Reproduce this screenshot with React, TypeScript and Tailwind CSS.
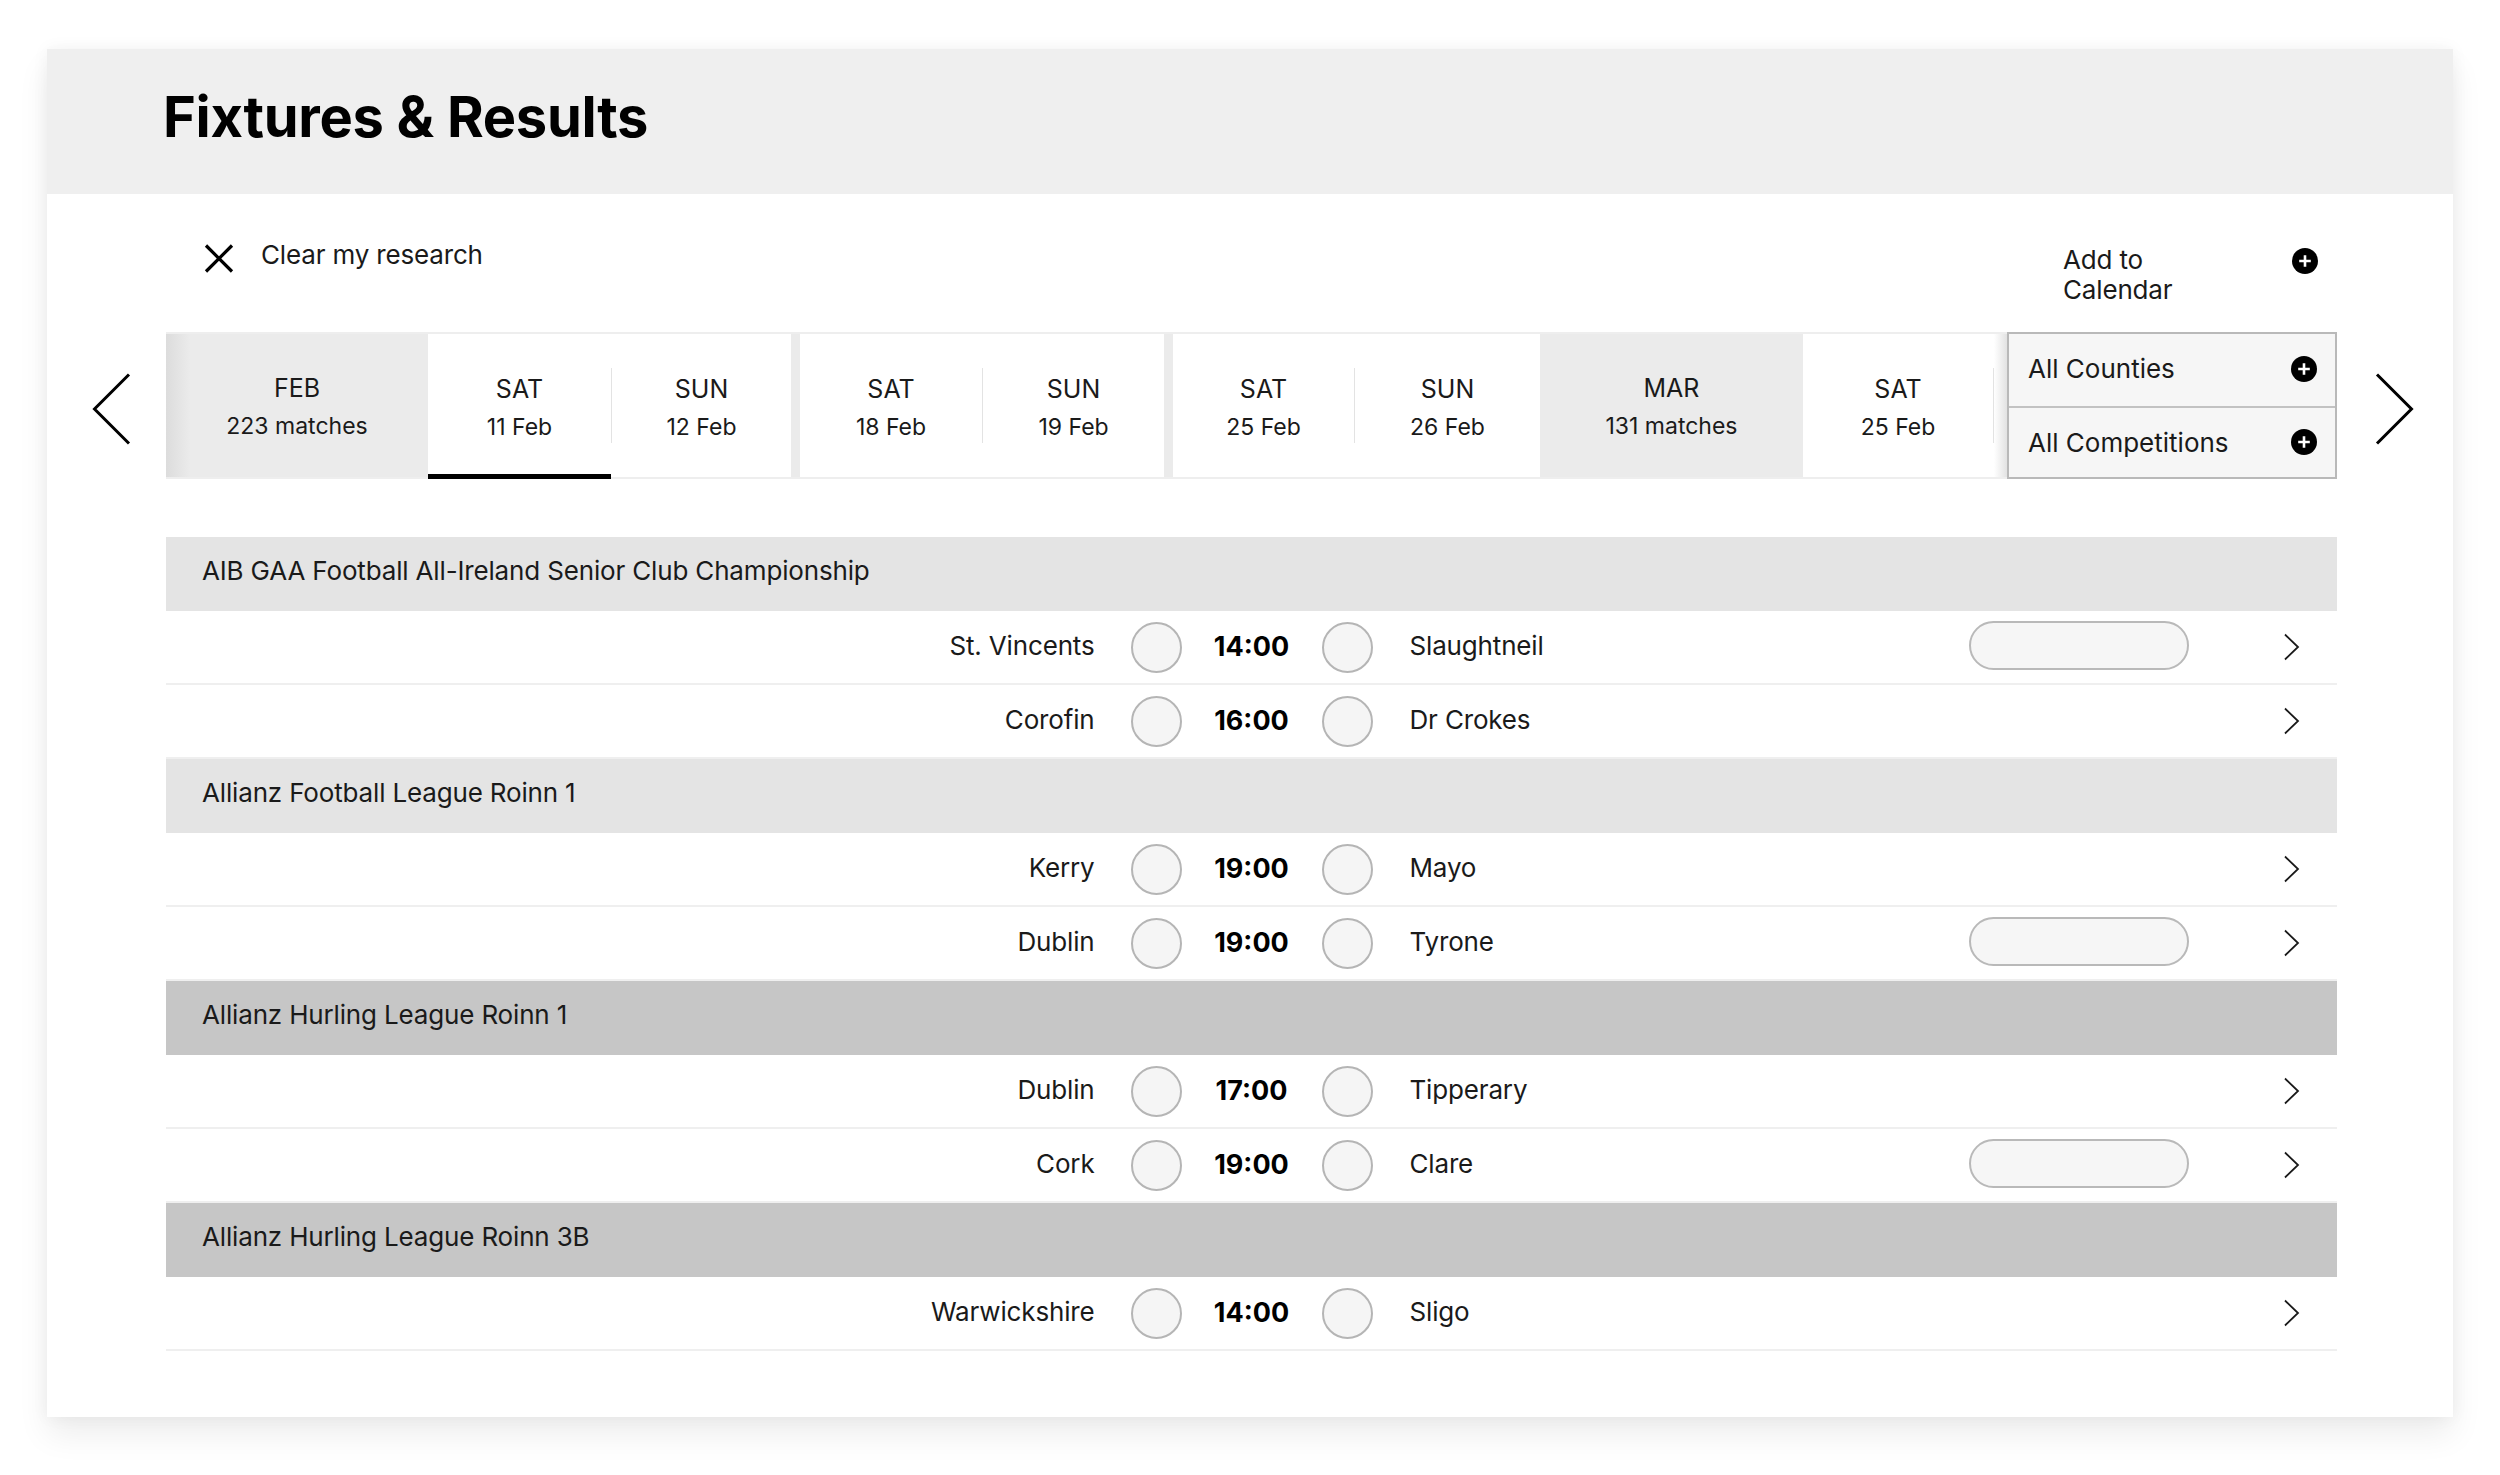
import React from "react";

type Match = { h: string; t: string; a: string; pill?: boolean };
type Group = { name: string; dark: boolean; matches: Match[] };

const groups: Group[] = [
  {
    name: "AIB GAA Football All-Ireland Senior Club Championship",
    dark: false,
    matches: [
      { h: "St. Vincents", t: "14:00", a: "Slaughtneil", pill: true },
      { h: "Corofin", t: "16:00", a: "Dr Crokes" },
    ],
  },
  {
    name: "Allianz Football League Roinn 1",
    dark: false,
    matches: [
      { h: "Kerry", t: "19:00", a: "Mayo" },
      { h: "Dublin", t: "19:00", a: "Tyrone", pill: true },
    ],
  },
  {
    name: "Allianz Hurling League Roinn 1",
    dark: true,
    matches: [
      { h: "Dublin", t: "17:00", a: "Tipperary" },
      { h: "Cork", t: "19:00", a: "Clare", pill: true },
    ],
  },
  {
    name: "Allianz Hurling League Roinn 3B",
    dark: true,
    matches: [{ h: "Warwickshire", t: "14:00", a: "Sligo" }],
  },
];

const PlusCircle = () => (
  <svg width="26" height="26" viewBox="0 0 26 26" className="shrink-0">
    <circle cx="13" cy="13" r="13" fill="#000" />
    <path d="M13 7.2v11.6M7.2 13h11.6" stroke="#fff" strokeWidth="2.6" />
  </svg>
);

const RowChevron = () => (
  <svg width="17" height="28" viewBox="0 0 17 28" className="shrink-0">
    <path d="M2 1.5 L15 14 L2 26.5" fill="none" stroke="#1a1a1a" strokeWidth="1.8" />
  </svg>
);

const DayTab = ({ day, date, w, active }: { day: string; date: string; w: string; active?: boolean }) => (
  <div className={`relative flex flex-col items-center justify-center pt-[5px] bg-white ${w}`}>
    <div className="text-[25px] leading-[38px] text-[#1a1a1a]">{day}</div>
    <div className="text-[23px] leading-[38px] text-[#1a1a1a]">{date}</div>
    {active && <div className="absolute left-0 right-0 -bottom-[2px] h-[5px] bg-black" />}
  </div>
);

const Divider = () => <div className="w-px h-[75px] bg-[#e3e3e3] self-center" />;
const Sep = () => <div className="w-[9px] bg-[#ebebeb]" />;

const MonthTab = ({ m, n, shade }: { m: string; n: string; shade?: boolean }) => (
  <div
    className={`w-[262px] flex flex-col items-center justify-center pt-[3px] ${
      shade ? "bg-[linear-gradient(to_right,#dcdcdc,#ebebeb_24px)]" : "bg-[#ebebeb]"
    }`}
  >
    <div className="text-[25px] leading-[38px] text-[#1a1a1a]">{m}</div>
    <div className="text-[23px] leading-[38px] text-[#1a1a1a]">{n}</div>
  </div>
);

export default function App() {
  return (
    <div className="min-h-screen bg-white pt-[49px] pl-[47px] font-[family-name:Inter,sans-serif] text-[#1a1a1a]">
      <div className="w-[2406px] h-[1368px] bg-white shadow-[0_18px_30px_rgba(0,0,0,0.07),0_0_16px_rgba(0,0,0,0.05)]">
        {/* Header */}
        <div className="h-[145px] bg-[#efefef] flex items-center pl-[116px] pb-[9px]">
          <h1 className="text-[56px] leading-none font-bold text-black tracking-[-0.005em]">
            Fixtures &amp; Results
          </h1>
        </div>

        {/* Controls */}
        <div className="h-[138px] flex items-start pt-[46px] tracking-[-0.01em]">
          <div className="ml-[157px] flex items-start gap-[27px]">
            <svg width="30" height="29" viewBox="0 0 30 29" className="mt-[4px]">
              <path d="M2 1.5 L28 27.5 M28 1.5 L2 27.5" stroke="#000" strokeWidth="3.2" />
            </svg>
            <span className="text-[26px] leading-[30px]">Clear my research</span>
          </div>
          <div className="ml-auto mr-[135px] w-[255px] flex justify-between items-start mt-[5px]">
            <span className="text-[26px] leading-[30px]">
              Add to
              <br />
              Calendar
            </span>
            <div className="mt-[3px]">
              <PlusCircle />
            </div>
          </div>
        </div>

        {/* Date strip */}
        <div className="flex items-center pl-[45px]">
          <svg width="39" height="72" viewBox="0 0 39 72" className="shrink-0 mt-[6px]">
            <path d="M37 1.5 L2.5 36 L37 70.5" fill="none" stroke="#000" strokeWidth="3" />
          </svg>
          <div className="ml-[35px] w-[1841px] h-[147px] flex border-y-2 border-[#eeeeee]">
            <MonthTab m="FEB" n="223 matches" shade />
            <DayTab day="SAT" date="11 Feb" w="w-[183px]" active />
            <Divider />
            <DayTab day="SUN" date="12 Feb" w="w-[179px]" />
            <Sep />
            <DayTab day="SAT" date="18 Feb" w="w-[182px]" />
            <Divider />
            <DayTab day="SUN" date="19 Feb" w="w-[181px]" />
            <Sep />
            <DayTab day="SAT" date="25 Feb" w="w-[181px]" />
            <Divider />
            <DayTab day="SUN" date="26 Feb" w="w-[185px]" />
            <div className="w-[263px] flex flex-col items-center justify-center pt-[3px] bg-[#ebebeb]">
              <div className="text-[25px] leading-[38px]">MAR</div>
              <div className="text-[23px] leading-[38px]">131 matches</div>
            </div>
            <DayTab day="SAT" date="25 Feb" w="w-[190px]" />
            <Divider />
            <div className="w-[13px] bg-[linear-gradient(to_right,#ffffff,#e2e2e2)]" />
          </div>
          <div className="w-[330px] h-[147px] border-2 border-[#b9b9b9] bg-[#f6f6f6] flex flex-col">
            <div className="flex-1 flex items-center justify-between pl-[19px] pr-[18px] pb-[2px] border-b-2 border-[#c2c2c2]">
              <span className="text-[26px]">All Counties</span>
              <PlusCircle />
            </div>
            <div className="flex-1 flex items-center justify-between pl-[19px] pr-[18px]">
              <span className="text-[26px]">All Competitions</span>
              <PlusCircle />
            </div>
          </div>
          <svg width="39" height="72" viewBox="0 0 39 72" className="shrink-0 ml-[38px] mt-[6px]">
            <path d="M2 1.5 L36.5 36 L2 70.5" fill="none" stroke="#000" strokeWidth="3" />
          </svg>
        </div>

        {/* Events */}
        <div className="mt-[58px] ml-[119px] w-[2171px] tracking-[-0.01em]">
          {groups.map((g) => (
            <div key={g.name}>
              <div
                className={`h-[74px] flex items-center pl-[36px] pb-[7px] text-[26px] ${
                  g.dark ? "bg-[#c6c6c6]" : "bg-[#e4e4e4]"
                }`}
              >
                {g.name}
              </div>
              {g.matches.map((m, i) => (
                <div
                  key={i}
                  className="h-[74px] grid grid-cols-[1fr_auto_1fr] items-center border-b-2 border-[#efefef]"
                >
                  <div className="flex justify-end pr-[36px] pb-[3px] text-[26px]">{m.h}</div>
                  <div className="flex items-center">
                    <div className="w-[51px] h-[51px] rounded-full border-2 border-[#b5b5b5] bg-[#f5f5f5]" />
                    <div className="w-[80px] mx-[30px] text-center text-[27px] font-bold text-black tracking-normal">{m.t}</div>
                    <div className="w-[51px] h-[51px] rounded-full border-2 border-[#b5b5b5] bg-[#f5f5f5]" />
                  </div>
                  <div className="flex items-center pl-[37px] pr-[37px]">
                    <span className="text-[26px] pb-[3px]">{m.a}</span>
                    <div className="flex-1" />
                    {m.pill && (
                      <div className="w-[220px] h-[49px] -mt-[4px] rounded-full border-2 border-[#b9b9b9] bg-[#f6f6f6]" />
                    )}
                    <div className="w-[94px]" />
                    <RowChevron />
                  </div>
                </div>
              ))}
            </div>
          ))}
        </div>
      </div>
    </div>
  );
}
